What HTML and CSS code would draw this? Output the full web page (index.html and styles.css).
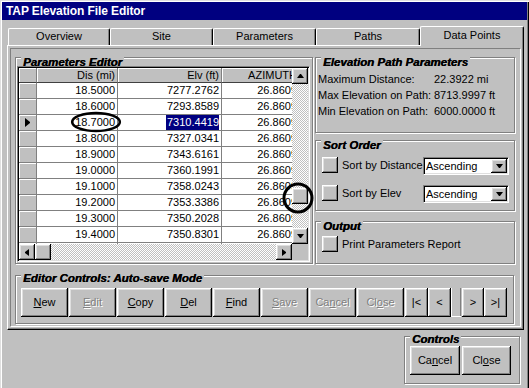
FILE: index.html
```html
<!DOCTYPE html>
<html>
<head>
<meta charset="utf-8">
<title>TAP Elevation File Editor</title>
<link rel="stylesheet" href="styles.css">
</head>
<body>
<div class="window">
  <div class="titlebar">TAP Elevation File Editor</div>

  <div class="tabs">
    <div class="tab w102">Overview</div>
    <div class="tab w103">Site</div>
    <div class="tab w103">Parameters</div>
    <div class="tab w104">Paths</div>
    <div class="tab w104 active">Data Points</div>
  </div>

  <div class="panel">
    <div class="panel-inner">
      <div class="top-area">
        <div class="frame params">
          <div class="legend">Parameters Editor</div>
          <div class="grid">
            <div class="grid-main">
              <div class="table">
                <div class="row head"><div class="c ind"></div><div class="c">Dis (mi)</div><div class="c">Elv (ft)</div><div class="c">AZIMUTH</div></div>
                <div class="row"><div class="c ind"></div><div class="c">18.5000</div><div class="c">7277.2762</div><div class="c">26.8609</div></div>
                <div class="row"><div class="c ind"></div><div class="c">18.6000</div><div class="c">7293.8589</div><div class="c">26.8609</div></div>
                <div class="row"><div class="c ind cur"><i class="tri"></i></div><div class="c">18.7000</div><div class="c"><span class="sel">7310.4419</span></div><div class="c">26.8609</div></div>
                <div class="row"><div class="c ind"></div><div class="c">18.8000</div><div class="c">7327.0341</div><div class="c">26.8609</div></div>
                <div class="row"><div class="c ind"></div><div class="c">18.9000</div><div class="c">7343.6161</div><div class="c">26.8609</div></div>
                <div class="row"><div class="c ind"></div><div class="c">19.0000</div><div class="c">7360.1991</div><div class="c">26.8609</div></div>
                <div class="row"><div class="c ind"></div><div class="c">19.1000</div><div class="c">7358.0243</div><div class="c">26.8609</div></div>
                <div class="row"><div class="c ind"></div><div class="c">19.2000</div><div class="c">7353.3386</div><div class="c">26.8609</div></div>
                <div class="row"><div class="c ind"></div><div class="c">19.3000</div><div class="c">7350.2028</div><div class="c">26.8609</div></div>
                <div class="row"><div class="c ind"></div><div class="c">19.4000</div><div class="c">7350.8301</div><div class="c">26.8609</div></div>
                <div class="row"><div class="c ind"></div><div class="c">19.5000</div><div class="c">7352.1120</div><div class="c">26.8609</div></div>
              </div>
              <div class="vscroll">
                <div class="sbtn raised"><i class="ar-up"></i></div>
                <div class="track t1"></div>
                <div class="sbtn raised"></div>
                <div class="track t2"></div>
                <div class="sbtn raised"><i class="ar-down"></i></div>
              </div>
            </div>
            <div class="hscroll">
              <div class="sbtn raised"><i class="ar-left"></i></div>
              <div class="sbtn raised"></div>
              <div class="track t2"></div>
              <div class="sbtn raised"><i class="ar-right"></i></div>
              <div class="corner"></div>
            </div>
          </div>
        </div>

        <div class="right-col">
          <div class="frame elev">
            <div class="legend">Elevation Path Parameters</div>
            <div class="kv">
              <span>Maximum Distance:</span><span>22.3922 mi</span>
              <span>Max Elevation on Path:</span><span>8713.9997 ft</span>
              <span>Min Elevation on Path:</span><span>6000.0000 ft</span>
            </div>
          </div>
          <div class="frame sort">
            <div class="legend">Sort Order</div>
            <div class="opt-row first">
              <div class="tbtn raised"></div>
              <div class="opt-label">Sort by Distance</div>
              <div class="combo"><div class="combo-text">Ascending</div><div class="combo-btn raised"><i class="ar-down"></i></div></div>
            </div>
            <div class="opt-row second">
              <div class="tbtn raised"></div>
              <div class="opt-label">Sort by Elev</div>
              <div class="combo"><div class="combo-text">Ascending</div><div class="combo-btn raised"><i class="ar-down"></i></div></div>
            </div>
          </div>
          <div class="frame output">
            <div class="legend">Output</div>
            <div class="opt-row out">
              <div class="tbtn raised"></div>
              <div class="opt-label">Print Parameters Report</div>
            </div>
          </div>
        </div>
      </div>

      <div class="frame editor">
        <div class="legend high">Editor Controls: Auto-save Mode</div>
        <div class="btn-row">
          <div class="btn raised"><u>N</u>ew</div>
          <div class="btn raised dis"><u>E</u>dit</div>
          <div class="btn raised"><u>C</u>opy</div>
          <div class="btn raised"><u>D</u>el</div>
          <div class="btn raised"><u>F</u>ind</div>
          <div class="btn raised dis"><u>S</u>ave</div>
          <div class="btn raised dis">Ca<u>n</u>cel</div>
          <div class="btn raised dis">Cl<u>o</u>se</div>
          <div class="btn raised nav w23">|&lt;</div>
          <div class="btn raised nav w23 g0">&lt;</div>
          <div class="spacer"></div>
          <div class="btn raised nav w22">&gt;</div>
          <div class="btn raised nav w23 g0">&gt;|</div>
        </div>
      </div>
    </div>
  </div>

  <div class="bottom">
    <div class="frame controls">
      <div class="legend high">Controls</div>
      <div class="ctl-row">
        <div class="btn raised w50">Ca<u>n</u>cel</div>
        <div class="btn raised w49">Cl<u>o</u>se</div>
      </div>
    </div>
  </div>

  <svg class="mark mark1" width="56" height="24" viewBox="0 0 56 24"><ellipse cx="27" cy="12" rx="23.8" ry="9" fill="none" stroke="#000" stroke-width="2.6"/></svg>
  <svg class="mark mark2" width="34" height="34" viewBox="0 0 34 34"><circle cx="17" cy="17" r="14" fill="none" stroke="#000" stroke-width="3"/></svg>
</div>
</body>
</html>
```

FILE: styles.css
```css
* { box-sizing: border-box; }
html, body { margin: 0; padding: 0; }
body {
  width: 529px; height: 388px; overflow: hidden;
  background: #c0c0c0;
  font-family: "Liberation Sans", Arial, sans-serif;
  font-size: 11px; color: #000;
}
.window {
  position: relative;
  width: 529px; height: 388px;
  padding: 2px;
  background: #c0c0c0;
  box-shadow: inset 1px 1px #dfdfdf, inset 2px 2px #fff, inset -1px 0 #000, inset -2px 0 #808080;
  display: flex; flex-direction: column;
}
.titlebar {
  height: 18px; flex: none;
  background: #000080; color: #fff;
  font-weight: bold; font-size: 12px; letter-spacing: -0.1px;
  line-height: 18px; padding-left: 4px;
}
.tabs {
  margin-top: 6px; height: 19px; flex: none;
  display: flex; align-items: flex-end;
  padding-left: 6px;
}
.tab {
  height: 17px;
  border: 1px solid; border-color: #fff #000 transparent #fff; border-bottom: none;
  border-radius: 2px 2px 0 0;
  box-shadow: inset -1px 0 #808080;
  text-align: center; line-height: 15px;
  background: #c0c0c0;
}
.tab.active {
  height: 20px; margin-bottom: -1px;
  position: relative; z-index: 1;
  line-height: 17px;
}
.w102 { width: 102px; } .w103 { width: 103px; } .w104 { width: 104px; }

.panel {
  margin-left: 5px; width: 517px; height: 285px; flex: none;
  border: 1px solid; border-color: #fff #000 #000 #fff;
  box-shadow: inset -1px -1px #808080;
  padding: 2px;
}
.panel-inner {
  height: 100%;
  border: 1px solid; border-color: #808080 #fff #fff #808080;
  padding: 8px 5px 0 4px;
  display: flex; flex-direction: column;
}
.top-area { display: flex; gap: 2px; height: 207px; flex: none; }

.frame {
  border: 1px solid #808080;
  box-shadow: inset 1px 1px #fff, 1px 1px #fff;
  display: flex; flex-direction: column; align-items: flex-start;
}
.legend {
  margin: -2px 0 0 5px; padding: 0 2px;
  height: 12px; line-height: 13px;
  background: #c0c0c0;
  font-weight: bold; font-style: italic; font-size: 11.5px;
  text-shadow: 0.4px 0 #000;
  white-space: nowrap;
}
.legend.high { margin-top: -4px; }

.params { width: 298px; height: 207px; }
.grid {
  margin: -2px 0 0 1px;
  width: 293px; height: 196px;
  border: 1px solid; border-color: #808080 #fff #fff #808080;
  box-shadow: inset 1px 1px #000, inset -1px -1px #dfdfdf;
  padding: 1px;
  display: flex; flex-direction: column;
}
.grid-main { display: flex; height: 176px; }
.table { width: 273px; height: 176px; overflow: hidden; background: #fff; }
.row {
  display: grid; grid-template-columns: 18px 81px 104px 78px;
  height: 16px; width: 281px;
}
.row.head { height: 15px; }
.c {
  border-right: 1px solid #808080; border-bottom: 1px solid #808080;
  background: #fff;
  text-align: right; padding-right: 2px;
  line-height: 15px; white-space: nowrap; overflow: hidden;
}
.row.head .c { background: #c0c0c0; box-shadow: inset 1px 1px #fff; line-height: 14px; border-bottom-color: #404040; }
.c.ind { background: #c0c0c0; box-shadow: inset 1px 1px #fff; padding: 0; }
.c.cur { display: flex; align-items: center; justify-content: center; }
.tri {
  display: block; height: 1px; width: 0; box-sizing: content-box;
  border-top: 4px solid transparent; border-bottom: 4px solid transparent;
  border-left: 5px solid #000;
}
.sel { background: #000080; color: #fff; display: inline-block; padding: 0 0 0 1px; }

.raised {
  background: #c0c0c0;
  box-shadow: inset -1px -1px #000, inset 1px 1px #fff, inset -2px -2px #808080, inset 2px 2px #dfdfdf;
}
.vscroll { width: 16px; height: 176px; display: flex; flex-direction: column; }
.sbtn { width: 16px; height: 16px; flex: none; display: flex; align-items: center; justify-content: center; }
.track {
  background-color: #c0c0c0;
  background-image: repeating-conic-gradient(#fff 0% 25%, #c0c0c0 0% 50%);
  background-size: 2px 2px;
}
.vscroll .t1 { height: 104px; flex: none; }
.vscroll .t2 { flex: 1; }
.hscroll { display: flex; height: 16px; }
.hscroll .t2 { flex: 1; }
.corner { width: 16px; height: 16px; background: #c0c0c0; }

.ar-up { display: block; width: 1px; height: 0; border-left: 3px solid transparent; border-right: 3px solid transparent; border-bottom: 4px solid #000; box-sizing: content-box; }
.ar-down { display: block; width: 1px; height: 0; border-left: 3px solid transparent; border-right: 3px solid transparent; border-top: 4px solid #000; box-sizing: content-box; }
.ar-left { display: block; width: 0; height: 1px; border-top: 3px solid transparent; border-bottom: 3px solid transparent; border-right: 4px solid #000; box-sizing: content-box; }
.ar-right { display: block; width: 0; height: 1px; border-top: 3px solid transparent; border-bottom: 3px solid transparent; border-left: 4px solid #000; box-sizing: content-box; }

.right-col { width: 200px; display: flex; flex-direction: column; }
.elev { height: 76px; }
.sort { height: 71px; margin-top: 7px; }
.output { height: 43px; margin-top: 10px; }
.kv {
  margin-top: 3px; padding-left: 2px;
  display: grid; grid-template-columns: 116px auto;
  line-height: 16px; white-space: nowrap;
}
.opt-row { display: flex; align-items: flex-start; margin-left: 6px; }
.opt-row.first { margin-top: 6px; }
.opt-row.second { margin-top: 10px; }
.opt-row.out { margin-top: 4px; }
.tbtn { width: 16px; height: 16px; flex: none; }
.opt-label { margin-left: 4px; width: 81px; line-height: 16px; white-space: nowrap; }
.out .opt-label { width: auto; }
.combo {
  width: 86px; height: 18px;
  border: 1px solid; border-color: #808080 #fff #fff #808080;
  box-shadow: inset 1px 1px #000, inset -1px -1px #dfdfdf;
  padding: 1px; background: #fff;
  display: flex;
}
.combo-text { flex: 1; line-height: 14px; padding-left: 1px; }
.combo-btn { width: 16px; height: 14px; display: flex; align-items: center; justify-content: center; }

.editor { width: 499px; height: 49px; margin-top: 11px; flex: none; }
.btn-row { display: flex; gap: 1px; margin: 4px 0 0 5px; }
.btn {
  width: 47px; height: 29px; flex: none;
  display: flex; align-items: center; justify-content: center;
  line-height: 13px;
}
.btn.dis { color: #808080; text-shadow: 1px 1px #fff; }
.btn.nav.g0 { margin-left: -1px; }
.w22 { width: 22px !important; } .w23 { width: 23px !important; }
.w49 { width: 49px !important; } .w50 { width: 50px !important; }
.spacer { width: 10px; height: 29px; margin-left: -1px; box-shadow: inset 1px 0 #fff, inset 0 -1px #fff, inset -1px 0 #808080; }

.bottom { display: flex; justify-content: flex-end; padding-right: 7px; margin-top: 6px; }
.controls { width: 116px; height: 48px; }
.ctl-row { display: flex; gap: 2px; margin: 1px 0 0 5px; }

.mark { position: absolute; pointer-events: none; }
.mark1 { left: 69px; top: 110px; }
.mark2 { left: 281px; top: 181px; }
```
